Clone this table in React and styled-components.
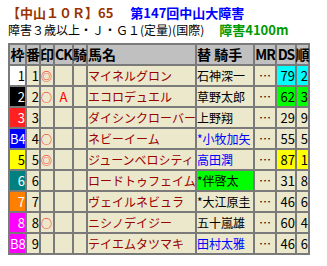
import React from 'react'
import styled, { createGlobalStyle } from 'styled-components'

const GlobalStyle = createGlobalStyle`
  html, body {
    margin: 0;
    padding: 0;
    background: #fff;
  }
  body {
    font-family: "Noto Sans CJK JP", "DejaVu Sans", sans-serif;
    color: #000;
  }
`

const horses = [
  { waku: '1', wakuBg: '#ffffff', wakuFg: '#000', ban: '1', mark: '◎', ck: '', name: 'マイネルグロン', jockey: '石神深一', jColor: '#000', ds: '79', jun: '2', dsBg: '#00ffff' },
  { waku: '2', wakuBg: '#000000', wakuFg: '#fff', ban: '2', mark: '○', ck: 'A', name: 'エコロデュエル', jockey: '草野太郎', jColor: '#000', ds: '62', jun: '3', dsBg: '#00ff00' },
  { waku: '3', wakuBg: '#ff2020', wakuFg: '#fff', ban: '3', mark: '', ck: '', name: 'ダイシンクローバー', jockey: '上野翔', jColor: '#000', ds: '29', jun: '9' },
  { waku: 'B4', wakuBg: '#0000ff', wakuFg: '#fff', ban: '4', mark: '○', ck: '', name: 'ネビーイーム', jockey: '*小牧加矢', jColor: '#0000ff', ds: '55', jun: '5' },
  { waku: '5', wakuBg: '#ffff00', wakuFg: '#000', ban: '5', mark: '◎', ck: '', name: 'ジューンベロシティ', jockey: '高田潤', jColor: '#0000ff', ds: '87', jun: '1', dsBg: '#ffff00' },
  { waku: '6', wakuBg: '#008080', wakuFg: '#fff', ban: '6', mark: '', ck: '', name: 'ロードトゥフェイム', jockey: '*伴啓太', jColor: '#000', jBg: '#00ff00', ds: '31', jun: '8' },
  { waku: '7', wakuBg: '#ff8000', wakuFg: '#fff', ban: '7', mark: '', ck: '', name: 'ヴェイルネビュラ', jockey: '*大江原圭', jColor: '#000', ds: '46', jun: '6' },
  { waku: '8', wakuBg: '#ff00ff', wakuFg: '#fff', ban: '8', mark: '○', ck: '', name: 'ニシノデイジー', jockey: '五十嵐雄', jColor: '#000', ds: '60', jun: '4' },
  { waku: 'B8', wakuBg: '#ff00ff', wakuFg: '#fff', ban: '9', mark: '', ck: '', name: 'テイエムタツマキ', jockey: '田村太雅', jColor: '#0000ff', ds: '46', jun: '6' },
]

function App() {
  return (
    <Page>
      <GlobalStyle />
      <TitleLine>
        <RaceNo>【中山１０Ｒ】65</RaceNo>
        <RaceName>第147回中山大障害</RaceName>
      </TitleLine>
      <SubLine>
        <span>障害３歳以上・Ｊ・Ｇ１(定量)(国際)</span>
        <Distance>障害4100m</Distance>
      </SubLine>
      <Grid>
        <Head>枠</Head>
        <Head>番</Head>
        <Head>印</Head>
        <Head $tight>CK</Head>
        <Head>騎</Head>
        <Head $left>馬名</Head>
        <Head $left>替 騎手</Head>
        <Head $tight>MR</Head>
        <Head $tight>DS</Head>
        <Head>順</Head>
        {horses.map(h => (
          <React.Fragment key={h.ban}>
            <Cell $align="right" $bg={h.wakuBg} $fg={h.wakuFg} $num>{h.waku}</Cell>
            <Cell $align="right" $num>{h.ban}</Cell>
            <Cell $align="left" $fg="#ff0000"><Mark>{h.mark}</Mark></Cell>
            <Cell $align="center" $fg="#ff0000" $num>{h.ck}</Cell>
            <Cell />
            <Cell $align="left" $fg="#990000">{h.name}</Cell>
            <Cell $align="left" $fg={h.jColor} $bg={h.jBg}>{h.jockey}</Cell>
            <Cell $align="center">…</Cell>
            <Cell $align="right" $bg={h.dsBg} $num>{h.ds}</Cell>
            <Cell $align="right" $bg={h.dsBg} $num>{h.jun}</Cell>
          </React.Fragment>
        ))}
      </Grid>
    </Page>
  )
}

const Page = styled.div`
  padding: 4px 8px 0 8px;
`

const TitleLine = styled.div`
  display: flex;
  gap: 17px;
  height: 17px;
  line-height: 17px;
  font-size: 13px;
  font-weight: bold;
  white-space: nowrap;
`

const RaceNo = styled.span`
  color: #993300;
  margin-left: -1px;
`

const RaceName = styled.span`
  color: #0000ff;
`

const SubLine = styled.div`
  display: flex;
  align-items: baseline;
  gap: 15px;
  height: 17px;
  line-height: 17px;
  font-size: 12px;
  white-space: nowrap;
  margin-bottom: 5px;
`

const Distance = styled.span`
  color: #009900;
  font-weight: bold;
  font-size: 13px;
`

const Grid = styled.div`
  display: grid;
  grid-template-columns: 15px 12px 12px 17px 12px 107px 56px 20px 18px 11px;
  grid-auto-rows: 19px;
  gap: 2px;
  padding: 2px;
  width: 302px;
  box-sizing: border-box;
  background: #7a7a7a;
`

const Head = styled.div`
  display: flex;
  justify-content: ${p => (p.$left ? 'flex-start' : 'center')};
  background: #c0c0c0;
  font-size: 14px;
  font-weight: bold;
  line-height: 19px;
  white-space: nowrap;
  letter-spacing: ${p => (p.$tight ? '-1px' : '0')};
`

const Cell = styled.div`
  background: ${p => p.$bg || '#ebe8cc'};
  color: ${p => p.$fg || '#000'};
  font-size: ${p => (p.$num ? '13px' : '12px')};
  line-height: 19px;
  text-align: ${p => p.$align || 'left'};
  white-space: nowrap;
  overflow: hidden;
`

const Mark = styled.span`
  font-size: 11px;
`

export default App
